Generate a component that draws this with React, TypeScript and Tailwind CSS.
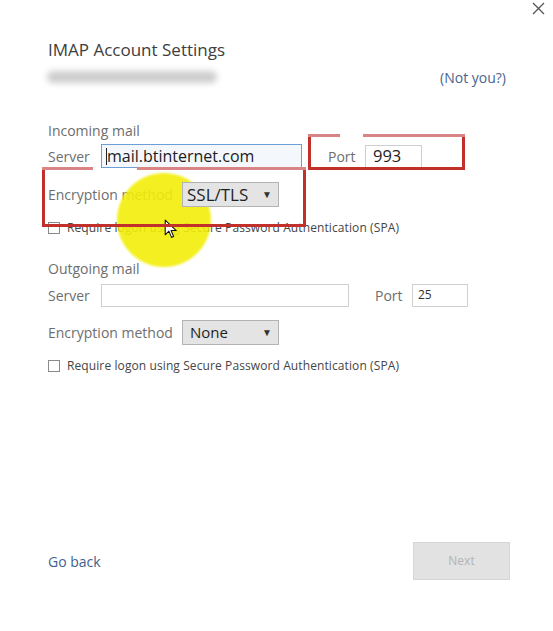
import React from 'react';

const labelCls = 'text-[14px] text-[#6e6e6e]';

const Checkbox: React.FC<{ label: string }> = ({ label }) => (
  <div className="flex items-center h-[16px]">
    <span className="w-[12px] h-[12px] border border-[#8a8a8a] bg-white" />
    <span className="ml-[7px] text-[12px] text-[#454545] tracking-[0.1px]">{label}</span>
  </div>
);

const Select: React.FC<{ value: string; big?: boolean }> = ({ value, big }) => (
  <div className="relative z-10 w-[97px] h-[25px] bg-[#e4e4e4] border border-[#b3b3b3] flex items-center justify-between pl-[4px] pr-[6px]">
    <span className={big ? 'text-[17px] text-[#1f1f1f] leading-none' : 'text-[15px] text-[#1f1f1f] pl-[3px] leading-none'}>{value}</span>
    <span className="text-[10px] text-[#333]">▼</span>
  </div>
);

const Cursor = () => (
  <svg width="14" height="20" viewBox="0 0 13 19" className="absolute z-20 left-[164px] top-[219px]">
    <path d="M1 1 L1 15 L4.5 11.5 L7 17.5 L9 16.6 L6.6 11 L11.5 11 Z" fill="#fff" stroke="#111" strokeWidth="1" strokeLinejoin="round" />
  </svg>
);

export default function App() {
  return (
    <div
      className="relative w-[553px] h-[631px] bg-white overflow-hidden"
      style={{ fontFamily: '"Open Sans", "Noto Sans", sans-serif' }}
    >
      {/* close */}
      <div className="flex justify-end pr-[8px] h-[16px] items-center">
        <svg width="13" height="13" viewBox="0 0 13 13">
          <path d="M1 1 L12 12 M12 1 L1 12" stroke="#555" strokeWidth="1.3" />
        </svg>
      </div>

      <div className="pl-[48px] pr-[47px]">
        <div className="mt-[22px] h-[24px] flex items-center text-[17px] text-[#3d3d3d]">IMAP Account Settings</div>

        <div className="mt-[7px] h-[16px] flex items-center justify-between">
          <div className="ml-[-1px] w-[170px] h-[12px] rounded-full bg-[#cdcdcd] blur-[3px]" />
          <span className="text-[14px] text-[#4a6590]">(Not you?)</span>
        </div>

        {/* incoming */}
        <div className={`mt-[36px] h-[18px] flex items-center ${labelCls}`}>Incoming mail</div>
        <div className="mt-[6px] h-[22px] flex items-center">
          <span className={`w-[53px] ${labelCls}`}>Server</span>
          <div className="w-[201px] h-[24px] border border-[#6c9fd6] bg-[#f4f8fd] flex items-center pl-[4px]">
            <span className="w-px h-[17px] bg-[#222]" />
            <span className="text-[16px] text-[#1c1c1c] leading-none">mail.btinternet.com</span>
          </div>
          <span className={`ml-[26px] w-[37px] ${labelCls}`}>Port</span>
          <div className="w-[57px] h-[23px] border border-[#cfcfcf] flex items-center pl-[7px] text-[16.5px] text-[#1c1c1c] leading-none">993</div>
        </div>
        <div className="mt-[14px] h-[26px] flex items-center">
          <span className={`w-[134px] ${labelCls}`}>Encryption method</span>
          <Select value="SSL/TLS" big />
        </div>
        <div className="mt-[13px]">
          <Checkbox label="Require logon using Secure Password Authentication (SPA)" />
        </div>

        {/* outgoing */}
        <div className={`mt-[23px] h-[18px] flex items-center ${labelCls}`}>Outgoing mail</div>
        <div className="mt-[7px] h-[22px] flex items-center">
          <span className={`w-[53px] ${labelCls}`}>Server</span>
          <div className="w-[248px] h-[23px] border border-[#cfcfcf]" />
          <span className={`ml-[26px] w-[37px] ${labelCls}`}>Port</span>
          <div className="w-[56px] h-[23px] border border-[#cfcfcf] flex items-center pl-[5px] text-[12px] text-[#333]">25</div>
        </div>
        <div className="mt-[14px] h-[24px] flex items-center">
          <span className={`w-[134px] ${labelCls}`}>Encryption method</span>
          <Select value="None" />
        </div>
        <div className="mt-[14px]">
          <Checkbox label="Require logon using Secure Password Authentication (SPA)" />
        </div>

        {/* footer */}
        <div className="mt-[168px] flex items-center justify-between mr-[-4px]">
          <span className="text-[14px] text-[#3f5f8f]">Go back</span>
          <div className="w-[97px] h-[38px] bg-[#e2e2e2] border border-[#d6d6d6] flex items-center justify-center text-[12px] text-[#b4b4b4]">
            Next
          </div>
        </div>
      </div>

      {/* highlight circle */}
      <div className="absolute left-[117px] top-[173px] w-[94px] h-[94px] rounded-full bg-[#f3ee08] opacity-[0.9] blur-[1px]" />
      <Cursor />

      {/* red annotation boxes */}
      <div className="absolute z-20 left-[308px] top-[134px] w-[157px] h-[36px] border-[3px] border-t-0 border-[#c2302c]" />
      <div className="absolute z-20 left-[308px] top-[134px] w-[32px] h-[3px] bg-[#d98585]" />
      <div className="absolute z-20 left-[363px] top-[134px] w-[102px] h-[3px] bg-[#d98585]" />

      <div className="absolute z-20 left-[42px] top-[167px] w-[264px] h-[60px] border-[3px] border-t-0 border-[#c2302c]" />
      <div className="absolute z-20 left-[42px] top-[167px] w-[51px] h-[3px] bg-[#d98585]" />
      <div className="absolute z-20 left-[137px] top-[167px] w-[169px] h-[3px] bg-[#d98585]" />
    </div>
  );
}
